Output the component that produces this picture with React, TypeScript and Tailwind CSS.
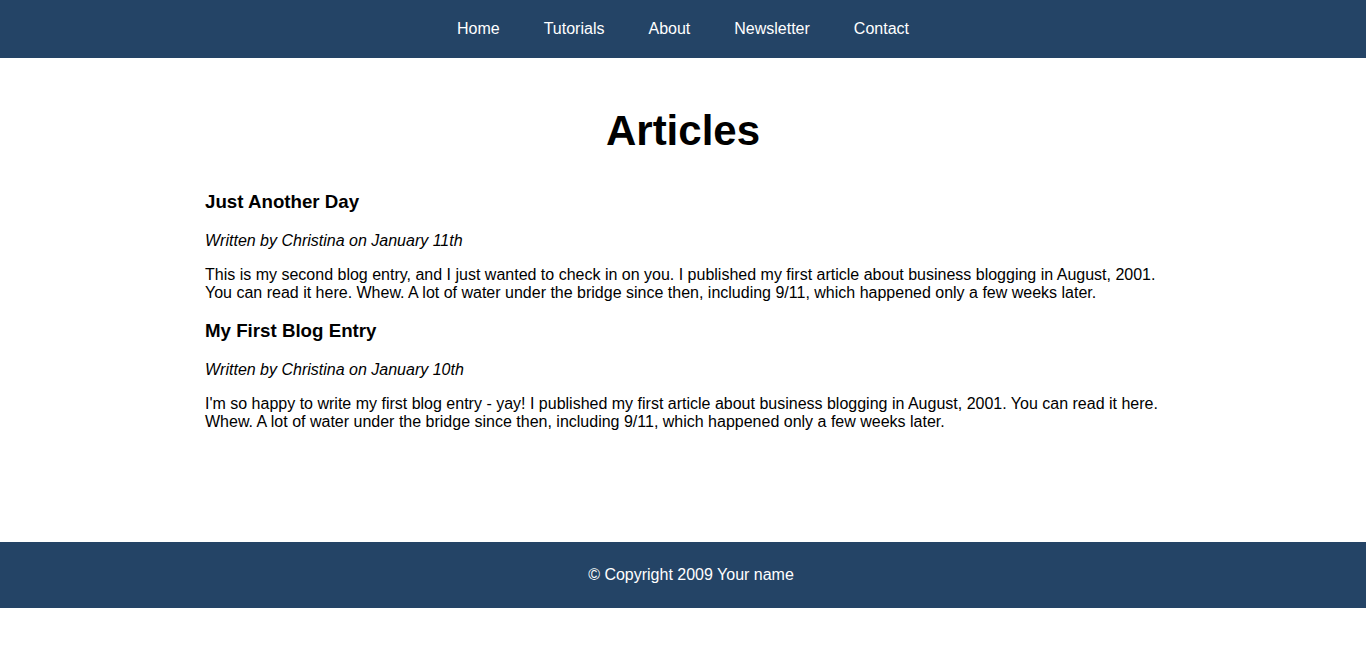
const links = ["Home", "Tutorials", "About", "Newsletter", "Contact"];

const articles = [
  {
    title: "Just Another Day",
    byline: "Written by Christina on January 11th",
    body: "This is my second blog entry, and I just wanted to check in on you. I published my first article about business blogging in August, 2001. You can read it here. Whew. A lot of water under the bridge since then, including 9/11, which happened only a few weeks later.",
  },
  {
    title: "My First Blog Entry",
    byline: "Written by Christina on January 10th",
    body: "I'm so happy to write my first blog entry - yay! I published my first article about business blogging in August, 2001. You can read it here. Whew. A lot of water under the bridge since then, including 9/11, which happened only a few weeks later.",
  },
];

export default function App() {
  return (
    <div className="min-h-[658px] bg-white text-black font-['Liberation_Sans',Arial,sans-serif]">
      <nav className="h-[58px] bg-[#244466] flex items-center justify-center">
        <ul className="flex items-center">
          {links.map((l) => (
            <li key={l} className="px-[22px]">
              <a href="#" className="text-white text-[16px] leading-[18px]">
                {l}
              </a>
            </li>
          ))}
        </ul>
      </nav>

      <main className="w-[956px] mx-auto pb-[111px]">
        <h1 className="mt-[49px] text-center font-bold text-[42px] leading-[48px]">
          Articles
        </h1>
        <div className="mt-[36px]">
          {articles.map((a, i) => (
            <article key={a.title} className={i > 0 ? "mt-[18px]" : ""}>
              <h3 className="font-bold text-[18.72px] leading-[21px]">{a.title}</h3>
              <p className="mt-[20px] italic text-[16px] leading-[18px]">{a.byline}</p>
              <p className="mt-4 text-[16px] leading-[18px]">{a.body}</p>
            </article>
          ))}
        </div>
      </main>

      <footer className="h-[66px] bg-[#244466] flex items-center justify-center pl-[16px]">
        <p className="text-white text-[16px] leading-[18px]">© Copyright 2009 Your name</p>
      </footer>
    </div>
  );
}
